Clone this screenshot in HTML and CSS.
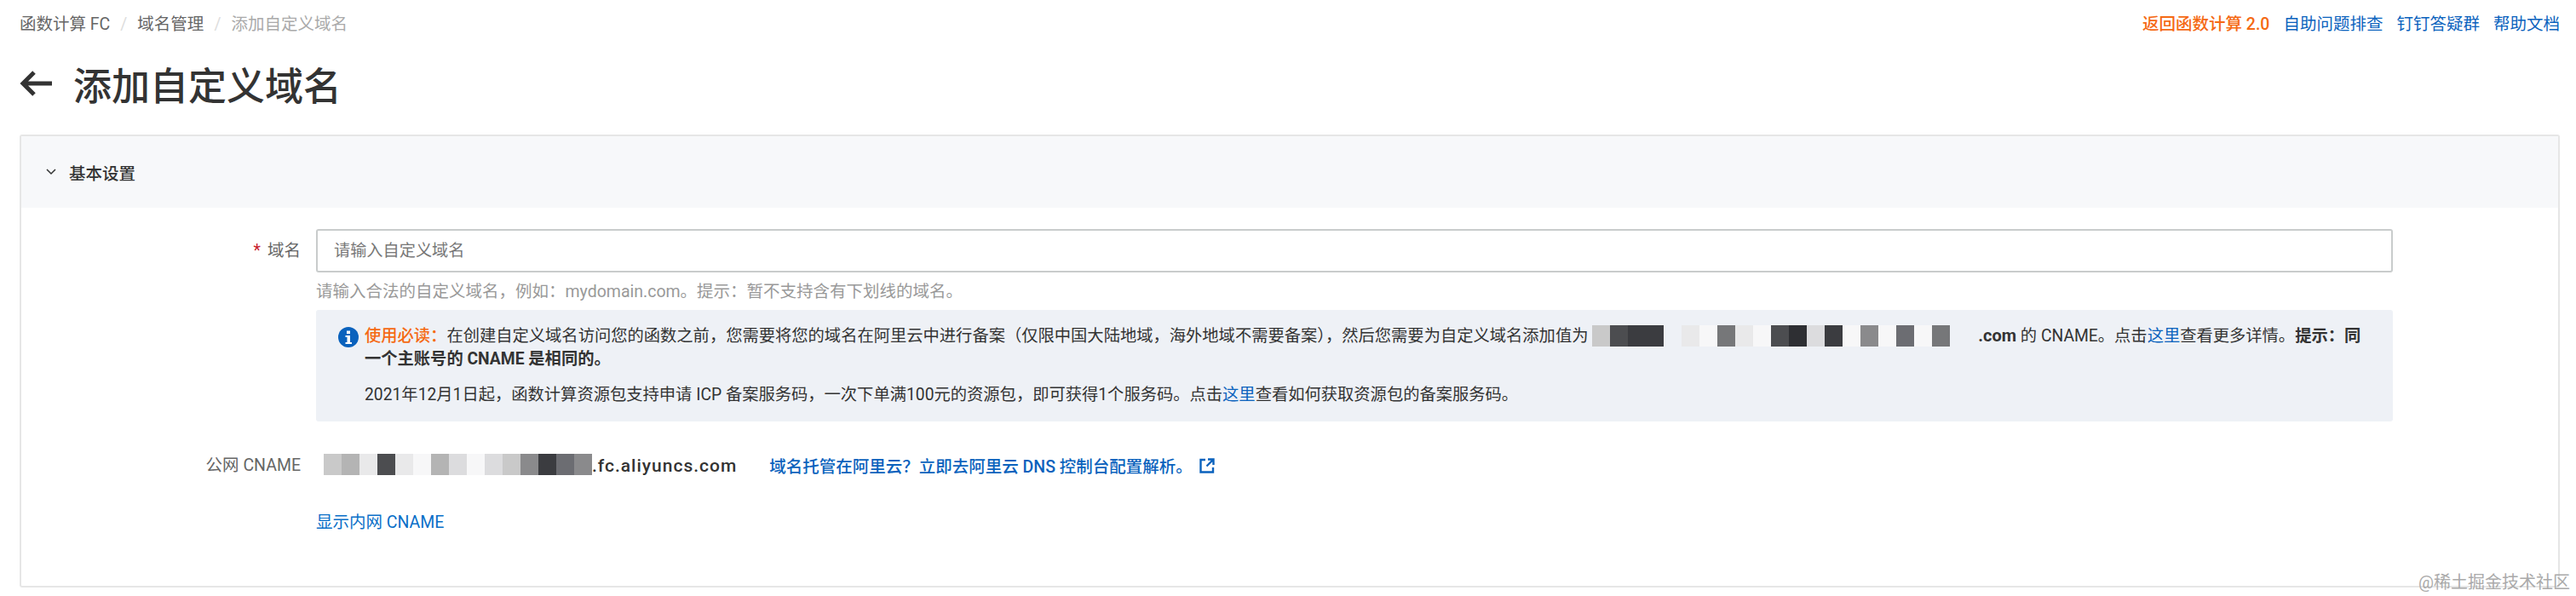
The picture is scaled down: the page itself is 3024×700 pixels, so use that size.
FILE: index.html
```html
<!DOCTYPE html>
<html lang="zh-CN">
<head>
  <meta charset="UTF-8" />
  <title>添加自定义域名</title>
  <link rel="stylesheet" href="styles.css">
</head>
<body>

  <!-- TOP BAR -->
  <div class="topbar">
    <div class="crumbs">
      <a>函数计算 FC</a><span class="sep">/</span><a>域名管理</a><span class="sep">/</span><span class="current">添加自定义域名</span>
    </div>
    <div class="toplinks">
      <a class="orange">返回函数计算 2.0</a>
      <a>自助问题排查</a>
      <a>钉钉答疑群</a>
      <a>帮助文档</a>
    </div>
  </div>

  <div class="title">
    <svg class="back" viewBox="0 0 40 32" width="40" height="32">
      <path d="M38 16H4M17 3L4 16l13 13" fill="none" stroke="#333" stroke-width="5"/>
    </svg>
    <h1>添加自定义域名</h1>
  </div>

  <!-- PANEL -->
  <div class="panel">
    <div class="panel-head">
      <svg class="chevron" viewBox="0 0 12 8" width="12" height="8">
        <path d="M1 1l5 5 5-5" fill="none" stroke="#333" stroke-width="1.5"/>
      </svg>
      <span>基本设置</span>
    </div>

    <div class="panel-body">
      <div class="row">
        <label class="label input-label"><span class="req">*</span>域名</label>
        <div class="control">
          <div class="input">请输入自定义域名</div>
          <div class="hint">请输入合法的自定义域名，例如：mydomain.com。提示：暂不支持含有下划线的域名。</div>
          <div class="alert">
            <svg class="info" viewBox="0 0 24 24" width="24" height="24">
              <circle cx="12" cy="12" r="12" fill="#0a62bd"/>
              <rect x="10" y="4.5" width="4" height="3.6" fill="#fff"/>
              <path d="M8.5 10h5.5v8h2v2H8.5v-2h2v-6h-2z" fill="#fff"/>
            </svg>
            <div class="alert-text">
              <p><span class="orange">使用必读：</span>在创建自定义域名访问您的函数之前，您需要将您的域名在阿里云中进行备案（仅限中国大陆地域，海外地域不需要备案），然后您需要为自定义域名添加值为 <span class="mosaic mosaic-alert"><i class="s-c"></i><i class="s-4"></i><i class="s-3"></i><i class="s-3"></i><i class="s-n"></i><i class="s-e"></i><i class="s-f"></i><i class="s-7"></i><i class="s-e"></i><i class="s-f"></i><i class="s-4"></i><i class="s-2"></i><i class="s-d"></i><i class="s-3"></i><i class="s-f"></i><i class="s-8"></i><i class="s-f"></i><i class="s-6"></i><i class="s-f"></i><i class="s-7"></i></span><b class="after-mosaic">.com</b> 的 CNAME。点击<a>这里</a>查看更多详情。<b>提示：同一个主账号的 CNAME 是相同的。</b></p>
              <p class="second">2021年12月1日起，函数计算资源包支持申请 ICP 备案服务码，一次下单满100元的资源包，即可获得1个服务码。点击<a>这里</a>查看如何获取资源包的备案服务码。</p>
            </div>
          </div>
        </div>
      </div>

      <div class="row cname-row">
        <label class="label">公网 CNAME</label>
        <div class="control cname">
          <span class="mosaic"><i class="s-c"></i><i class="s-b"></i><i class="s-e"></i><i class="s-4"></i><i class="s-e"></i><i class="s-f"></i><i class="s-b"></i><i class="s-d"></i><i class="s-f"></i><i class="s-d"></i><i class="s-c"></i><i class="s-8"></i><i class="s-3"></i><i class="s-6"></i><i class="s-8"></i></span><span class="domain">.fc.aliyuncs.com</span>
          <a class="dns">域名托管在阿里云？立即去阿里云 DNS 控制台配置解析。</a>
          <svg class="ext" viewBox="0 0 18 18" width="18" height="18">
            <path d="M7 2H1.5v14.5H16V11M10 1.5h6.5V8M16 2L8.5 9.5" fill="none" stroke="#0a62bd" stroke-width="2.4"/>
          </svg>
        </div>
      </div>

      <div class="row more-row">
        <div class="label"></div>
        <div class="control"><a class="more">显示内网 CNAME</a></div>
      </div>
    </div>
  </div>

  <div class="watermark">@稀土掘金技术社区</div>

</body>
</html>
```

FILE: styles.css
```css
* {
  box-sizing: border-box;
}

html, body {
  height: 700px;
  overflow: hidden;
}

body {
  margin: 0;
  padding: 0 19px 0 23px;
  position: relative;
  background: #fff;
  color: #333;
  font-family: Roboto, "Noto Sans CJK SC", sans-serif;
  font-size: 19.5px;
}

a {
  color: #0a62bd;
  cursor: pointer;
}

.orange {
  color: #f56a14;
  font-weight: 500;
}

/* top bar */
.topbar {
  display: flex;
  justify-content: space-between;
  align-items: center;
  height: 54px;
  padding-bottom: 2px;
}

.crumbs a {
  color: #666;
}

.crumbs .sep {
  color: #ddd;
  margin: 0 12px;
}

.crumbs .current {
  color: #aaa;
}

.toplinks {
  display: flex;
  gap: 16px;
}

.toplinks a.orange {
  color: #f56a14;
}

/* page title */
.title {
  display: flex;
  align-items: center;
  gap: 23px;
  height: 88px;
}

.title h1 {
  margin: 0;
  font-size: 45px;
  font-weight: 500;
  color: #333;
}

/* panel */
.panel {
  margin-top: 16px;
  height: 532px;
  border: 2px solid #e6e6e6;
  border-radius: 3px;
}

.panel-head {
  display: flex;
  align-items: center;
  height: 84px;
  padding-left: 29px;
  background: #f7f8fa;
  font-weight: 500;
}

.chevron {
  margin-right: 15px;
}

.panel-body {
  padding: 25px 194px 0 0;
}

.row {
  display: flex;
}

.label {
  flex: none;
  width: 328px;
  text-align: right;
  color: #666;
  line-height: 27px;
}

.input-label {
  line-height: 51px;
}

.req {
  color: #c8202c;
  margin-right: 8px;
}

.control {
  flex: 1;
  margin-left: 18px;
  min-width: 0;
}

.input {
  height: 51px;
  line-height: 47px;
  padding-left: 19px;
  border: 2px solid #c9cccc;
  border-radius: 3px;
  font-size: 19.2px;
  color: #777;
}

.hint {
  margin-top: 8px;
  line-height: 30px;
  color: #999;
}

.alert {
  display: flex;
  margin-top: 6px;
  height: 131px;
  padding: 17px 24px 0 26px;
  background: #eef1f6;
  border-radius: 3px;
  color: #333;
}

.info {
  flex: none;
  margin: 3px 7px 0 0;
}

.alert-text p {
  margin: 0;
  font-size: 19.3px;
  line-height: 27px;
}

.alert-text b {
  font-weight: 700;
}

.alert-text .second {
  margin-top: 15px;
}

/* blurred-out values */
.mosaic {
  display: inline-flex;
  vertical-align: middle;
  height: 25px;
  margin-top: -3px;
}

.mosaic i {
  display: block;
  width: 21px;
}

.after-mosaic {
  margin-left: 33px;
  font-size: 20px;
}

.s-n { background: #eef1f6; }
.s-2 { background: #2e2f33; }
.s-3 { background: #3b3c40; }
.s-4 { background: #4c4d50; }
.s-6 { background: #6c6d72; }
.s-7 { background: #767779; }
.s-8 { background: #8a8a8c; }
.s-b { background: #b4b4b4; }
.s-c { background: #c9c9c9; }
.s-d { background: #dcdcde; }
.s-e { background: #e9e9ea; }
.s-f { background: #f7f7f8; }

.cname-row {
  margin-top: 38px;
}

.cname {
  display: flex;
  align-items: center;
  margin-left: 27px;
  height: 27px;
}

.domain {
  font-size: 21px;
  font-weight: 500;
  letter-spacing: 1px;
  color: #333;
}

.dns {
  margin-left: 38px;
  font-weight: 500;
}

.ext {
  margin-left: 8px;
}

.more-row {
  margin-top: 37px;
}

.more {
  color: #0a6fc8;
}

.watermark {
  position: absolute;
  right: 7px;
  bottom: 4px;
  font-size: 20px;
  line-height: 24px;
  color: #aaa;
}
```
